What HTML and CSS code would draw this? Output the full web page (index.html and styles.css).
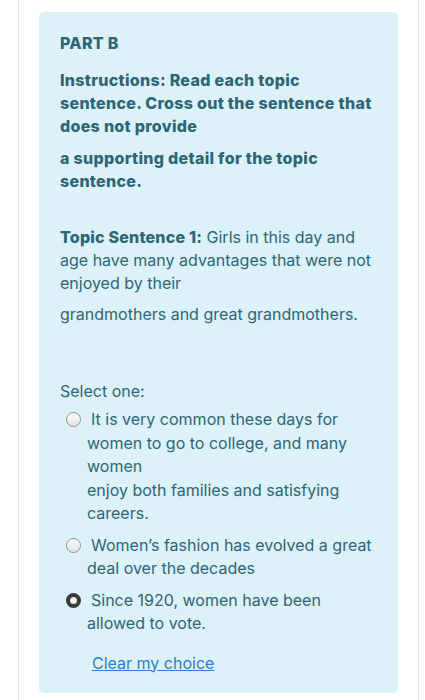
FILE: index.html
```html
<!DOCTYPE html>
<html>
<head>
<meta charset="utf-8">
<link rel="stylesheet" href="styles.css">
</head>
<body>
<div class="card">
  <div class="panel">
    <p class="title">PART B</p>
    <p class="instr">Instructions: Read each topic sentence. Cross out the sentence that does not provide</p>
    <p class="instr">a supporting detail for the topic sentence.</p>
    <p class="topic"><strong>Topic Sentence 1:</strong> Girls in this day and age have many advantages that were not enjoyed by their</p>
    <p class="topic">grandmothers and great grandmothers.</p>
    <p class="prompt">Select one:</p>
    <div class="answers">
      <div class="option"><span class="radio"></span>It is very common these days for women to go to college, and many women<br>enjoy both families and satisfying careers.</div>
      <div class="option"><span class="radio"></span>Women’s fashion has evolved a great deal over the decades</div>
      <div class="option"><span class="radio checked"></span>Since 1920, women have been allowed to vote.</div>
    </div>
    <a class="clear" href="#">Clear my choice</a>
  </div>
</div>
</body>
</html>
```
FILE: styles.css
```css
html, body {
  margin: 0;
  padding: 0;
  background: #ffffff;
}
body {
  font-family: Inter, "Noto Sans", sans-serif;
  color: #2e6676;
}
.card {
  margin: 0 6px 0 18px;
  border-left: 1px solid #e4e4e4;
  border-right: 1px solid #e4e4e4;
  padding: 12px 0 8px 0;
}
.panel {
  margin: 0 20px 0 20px;
  background: #dcf1f8;
  border-radius: 5px;
  padding: 20px 20px 18px 21px;
}
p {
  margin: 0;
}
.title {
  font-weight: 800;
  font-size: 16px;
  line-height: 23px;
  letter-spacing: 0.3px;
  margin-bottom: 14px;
}
.instr {
  font-weight: 800;
  font-size: 16px;
  line-height: 23px;
  letter-spacing: 0.3px;
  margin-bottom: 9px;
}
.instr + .instr {
  margin-bottom: 33px;
}
.topic {
  font-size: 16px;
  line-height: 23px;
  margin-bottom: 8px;
}
.topic strong {
  font-weight: 800;
  letter-spacing: 0.2px;
}
.topic + .topic {
  margin-bottom: 54px;
}
.prompt {
  font-size: 16px;
  line-height: 23px;
  margin-bottom: 5px;
}
.answers {
  display: flex;
  flex-direction: column;
  gap: 8px;
}
.option {
  font-size: 16px;
  line-height: 23.5px;
  padding-left: 27px;
  text-indent: -21px;
}
.radio {
  display: inline-block;
  box-sizing: border-box;
  width: 15px;
  height: 15px;
  border-radius: 50%;
  border: 1px solid #8d8d8d;
  background: linear-gradient(#ffffff, #e2e2e2);
  vertical-align: -2px;
  margin-right: 10px;
  text-indent: 0;
}
.radio.checked {
  border: 4px solid #3a3a3a;
  background: radial-gradient(circle, #ffffff 0, #d8d8d8 100%);
}
.clear {
  display: inline-block;
  margin: 16px 0 0 32px;
  font-size: 16px;
  line-height: 23px;
  color: #2a7dd1;
  text-decoration: underline;
}
```
